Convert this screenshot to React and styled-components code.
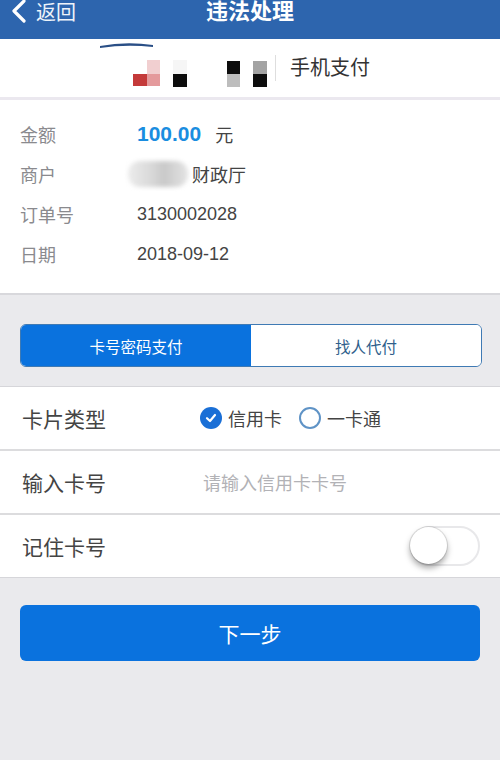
import React, { useState } from "react";
import styled, { createGlobalStyle } from "styled-components";

const GlobalStyle = createGlobalStyle`
    html, body {
        margin: 0;
        padding: 0;
        background: #eaeaed;
        font-family: "Liberation Sans", "Noto Sans CJK SC", sans-serif;
    }
`

const Page = styled.div`
    width: 500px;
    height: 760px;
    display: flex;
    flex-direction: column;
    background: #eaeaed;
    overflow: hidden;
`

const NavBar = styled.div`
    height: 39px;
    background: #2d65ae;
    display: flex;
    align-items: flex-start;
    position: relative;
    color: #fff;
`

const Back = styled.div`
    display: flex;
    align-items: center;
    gap: 8px;
    padding-left: 10px;
    height: 22px;
    font-size: 20px;
    color: #eef3fa;
`

const NavTitle = styled.div`
    position: absolute;
    left: 0;
    right: 0;
    top: 0;
    text-align: center;
    font-size: 22px;
    font-weight: bold;
    line-height: 24px;
`

const LogoBar = styled.div`
    height: 58px;
    background: #fff;
    border-bottom: 3px solid #ebe8ef;
    display: flex;
    align-items: flex-start;
`

const Brand = styled.div`
    font-size: 20px;
    color: #333;
    margin-top: 16px;
    padding-left: 14px;
    line-height: 26px;
`

const Info = styled.div`
    background: #fff;
    padding: 14px 0 19px 20px;
    border-bottom: 2px solid #d8d8dc;
    display: flex;
    flex-direction: column;
`

const InfoRow = styled.div`
    height: 40px;
    display: flex;
    align-items: center;
    font-size: 18px;
`

const InfoLabel = styled.div`
    width: 117px;
    color: #8a8a8e;
`

const InfoValue = styled.div`
    color: #444;
    display: flex;
    align-items: center;
`

const Amount = styled.span`
    color: #1a8de0;
    font-weight: bold;
    font-size: 21px;
    margin-right: 14px;
`

const Blur = styled.span`
    display: inline-block;
    width: 60px;
    height: 26px;
    margin-left: -9px;
    margin-right: 4px;
    border-radius: 12px;
    background: linear-gradient(90deg, #ececec 0%, #d8d8d8 40%, #c9c9c9 60%, #e4e4e4 100%);
    filter: blur(2px);
`

const Band = styled.div`
    padding: 29px 18px 19px 20px;
    border-bottom: 1px solid #d6d6da;
`

const Segment = styled.div`
    display: flex;
    height: 41px;
    border: 1px solid #3f7ab4;
    border-radius: 6px;
    overflow: hidden;
    background: #fff;
`

const SegItem = styled.div`
    flex: 1;
    display: flex;
    align-items: center;
    justify-content: center;
    font-size: 15.5px;
    background: ${p => (p.active ? "#0a72de" : "#fff")};
    color: ${p => (p.active ? "#fff" : "#2f5f8c")};
`

const Form = styled.div`
    background: #fff;
    border-bottom: 1px solid #d6d6da;
`

const FormRow = styled.div`
    height: 62px;
    display: flex;
    align-items: center;
    padding: 0 22px;
    border-top: ${p => (p.first ? "none" : "2px solid #dcdcde")};
`

const FormLabel = styled.div`
    width: 178px;
    font-size: 21px;
    color: #444;
`

const Radio = styled.div`
    display: flex;
    align-items: center;
    gap: 6px;
    font-size: 18px;
    color: #444;
    margin-right: 17px;
`

const Circle = styled.span`
    width: 22px;
    height: 22px;
    border-radius: 50%;
    box-sizing: border-box;
    display: flex;
    align-items: center;
    justify-content: center;
    background: ${p => (p.checked ? "#1a6fd6" : "#fff")};
    border: ${p => (p.checked ? "none" : "2px solid #5f93c6")};
`

const Placeholder = styled.div`
    font-size: 18px;
    color: #b2b2b6;
    margin-left: 3px;
`

const Switch = styled.div`
    margin-left: auto;
    width: 70px;
    height: 40px;
    box-sizing: border-box;
    border-radius: 20px;
    border: 2px solid #e8e8ea;
    background: #fff;
    position: relative;
    margin-right: -2px;
`

const Knob = styled.span`
    position: absolute;
    left: -2px;
    top: -1px;
    width: 37px;
    height: 37px;
    border-radius: 50%;
    background: #fff;
    box-shadow: 0 4px 6px rgba(0, 0, 0, 0.35), 0 0 0 1px rgba(0, 0, 0, 0.1);
`

const Footer = styled.div`
    padding: 27px 20px;
`

const NextButton = styled.button`
    width: 100%;
    height: 56px;
    border: none;
    border-radius: 6px;
    background: #0a72de;
    color: #fff;
    font-size: 21px;
    font-family: inherit;
`

const Logo = () => (
    <svg width="276" height="58" viewBox="0 0 276 58">
        <path d="M100 7 Q126 2 153 6 L153 8 Q126 5 100 9 Z" fill="#2a4f86" />
        <rect x="147" y="21" width="13" height="14" fill="#f1cfd0" />
        <rect x="133" y="35" width="14" height="12" fill="#c43a3a" />
        <rect x="147" y="35" width="13" height="12" fill="#e49a9c" />
        <rect x="173" y="35" width="14" height="13" fill="#0d0d0d" />
        <rect x="173" y="21" width="14" height="14" fill="#f6f6f6" />
        <rect x="227" y="22" width="13" height="13" fill="#0d0d0d" />
        <rect x="227" y="35" width="13" height="13" fill="#bdbdbd" />
        <rect x="253" y="22" width="14" height="13" fill="#a3a3a3" />
        <rect x="253" y="35" width="14" height="13" fill="#0d0d0d" />
        <rect x="275" y="16" width="1" height="26" fill="#dedede" />
    </svg>
)

const App = () => {
    const [remember] = useState(false)
    return (
        <Page>
            <GlobalStyle />
            <NavBar>
                <Back>
                    <svg width="18" height="24" viewBox="0 0 18 24">
                        <path d="M14 2 L4 12 L14 22" fill="none" stroke="#fff" strokeWidth="3.2" strokeLinecap="round" strokeLinejoin="round" />
                    </svg>
                    返回
                </Back>
                <NavTitle>违法处理</NavTitle>
            </NavBar>
            <LogoBar>
                <Logo />
                <Brand>手机支付</Brand>
            </LogoBar>
            <Info>
                <InfoRow>
                    <InfoLabel>金额</InfoLabel>
                    <InfoValue><Amount>100.00</Amount>元</InfoValue>
                </InfoRow>
                <InfoRow>
                    <InfoLabel>商户</InfoLabel>
                    <InfoValue><Blur />财政厅</InfoValue>
                </InfoRow>
                <InfoRow>
                    <InfoLabel>订单号</InfoLabel>
                    <InfoValue>3130002028</InfoValue>
                </InfoRow>
                <InfoRow>
                    <InfoLabel>日期</InfoLabel>
                    <InfoValue>2018-09-12</InfoValue>
                </InfoRow>
            </Info>
            <Band>
                <Segment>
                    <SegItem active>卡号密码支付</SegItem>
                    <SegItem>找人代付</SegItem>
                </Segment>
            </Band>
            <Form>
                <FormRow first>
                    <FormLabel>卡片类型</FormLabel>
                    <Radio>
                        <Circle checked>
                            <svg width="14" height="14" viewBox="0 0 14 14">
                                <path d="M3 7.2 L6 10 L11 4" fill="none" stroke="#fff" strokeWidth="2.2" strokeLinecap="round" strokeLinejoin="round" />
                            </svg>
                        </Circle>
                        信用卡
                    </Radio>
                    <Radio>
                        <Circle />
                        一卡通
                    </Radio>
                </FormRow>
                <FormRow>
                    <FormLabel>输入卡号</FormLabel>
                    <Placeholder>请输入信用卡卡号</Placeholder>
                </FormRow>
                <FormRow>
                    <FormLabel>记住卡号</FormLabel>
                    <Switch aria-checked={remember}>
                        <Knob />
                    </Switch>
                </FormRow>
            </Form>
            <Footer>
                <NextButton>下一步</NextButton>
            </Footer>
        </Page>
    )
}

export default App;
